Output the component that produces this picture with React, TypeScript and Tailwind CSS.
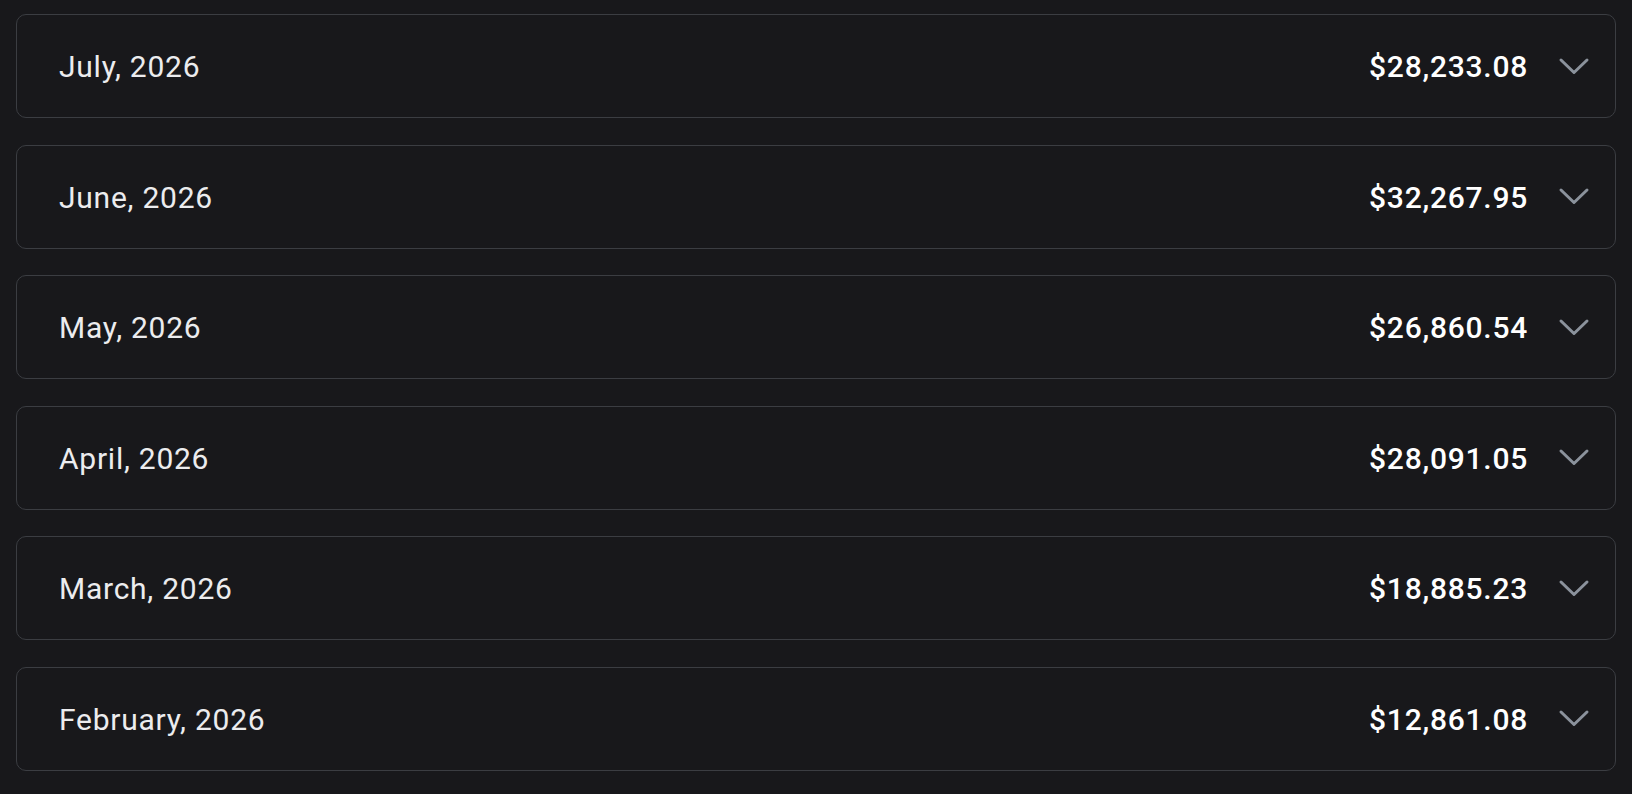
const months = [
  { label: "July, 2026", total: "$28,233.08" },
  { label: "June, 2026", total: "$32,267.95" },
  { label: "May, 2026", total: "$26,860.54" },
  { label: "April, 2026", total: "$28,091.05" },
  { label: "March, 2026", total: "$18,885.23" },
  { label: "February, 2026", total: "$12,861.08" },
];

function Chevron() {
  return (
    <svg width="32" height="19" viewBox="0 0 32 19" fill="none" className="shrink-0">
      <path
        d="M3 3 L16 15.5 L29 3"
        stroke="#8b929c"
        strokeWidth="3"
        strokeLinecap="round"
        strokeLinejoin="round"
      />
    </svg>
  );
}

export default function App() {
  return (
    <main
      className="min-h-screen bg-[#18181b] px-4 pt-[14px] pb-6"
      style={{ fontFamily: "Roboto, 'Liberation Sans', sans-serif" }}
    >
      <div className="flex flex-col gap-[26.5px]">
        {months.map((m) => (
          <button
            key={m.label}
            className="flex h-[104px] w-full items-center justify-between rounded-[10px] border border-[#3b3d42] bg-[#18181b] pl-[42px] pr-[25px] text-left"
          >
            <span className="pt-[1px] text-[30px] font-normal tracking-wide text-[#ececee]">
              {m.label}
            </span>
            <span className="flex items-center gap-[30px]">
              <span className="pt-[1px] text-[30px] font-medium tracking-wide text-white">
                {m.total}
              </span>
              <Chevron />
            </span>
          </button>
        ))}
      </div>
    </main>
  );
}
